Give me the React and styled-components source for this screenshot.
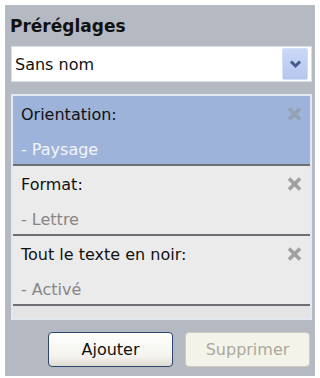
import React from "react";
import styled, { createGlobalStyle } from "styled-components";

const GlobalStyle = createGlobalStyle`
  body {
    margin: 0;
    background: #ffffff;
    font-family: "DejaVu Sans", "Liberation Sans", sans-serif;
  }
`;

const presets = [
  { label: "Orientation:", value: "- Paysage", selected: true },
  { label: "Format:", value: "- Lettre" },
  { label: "Tout le texte en noir:", value: "- Activé" },
];

const CloseIcon = ({ color }) => (
  <IconBox width="15" height="14" viewBox="0 0 15 14">
    <path
      d="M2 1.5 L13 12.5 M13 1.5 L2 12.5"
      stroke={color}
      strokeWidth="3.6"
    />
  </IconBox>
);

const Chevron = () => (
  <svg width="13" height="10" viewBox="0 0 13 10">
    <path
      d="M2 2.5 L6.5 7 L11 2.5"
      fill="none"
      stroke="#45598a"
      strokeWidth="3"
    />
  </svg>
);

const App = () => {
  return (
    <>
      <GlobalStyle />
      <Panel>
        <Title>Préréglages</Title>
        <Combo>
          <ComboText>Sans nom</ComboText>
          <DropButton>
            <Chevron />
          </DropButton>
        </Combo>
        <List>
          {presets.map((p) => (
            <Item key={p.label} selected={p.selected}>
              <ItemHead>
                <ItemLabel>{p.label}</ItemLabel>
                <CloseIcon color={p.selected ? "#95a1b3" : "#a0a0a0"} />
              </ItemHead>
              <ItemValue selected={p.selected}>{p.value}</ItemValue>
            </Item>
          ))}
        </List>
        <Buttons>
          <Button>Ajouter</Button>
          <Button disabled>Supprimer</Button>
        </Buttons>
      </Panel>
    </>
  );
};

const Panel = styled.div`
  margin: 5px 5px 0 5px;
  width: 310px;
  height: 371px;
  box-sizing: border-box;
  background: #b5b9c1;
  padding: 11px 3px 0 6px;
  display: flex;
  flex-direction: column;
`;

const Title = styled.div`
  font-weight: bold;
  font-size: 17px;
  line-height: 20px;
  color: #111;
  margin-left: -1px;
`;

const Combo = styled.div`
  margin-top: 10px;
  height: 36px;
  box-sizing: border-box;
  border: 1px solid #d6dfec;
  background: #fff;
  display: flex;
  align-items: center;
  justify-content: space-between;
  padding: 0 3px 0 3px;
`;

const ComboText = styled.span`
  font-size: 16px;
  color: #111;
`;

const DropButton = styled.div`
  width: 26px;
  height: 32px;
  box-sizing: border-box;
  border: 1px solid #d4def4;
  border-radius: 2px;
  background: linear-gradient(#cbd8f7, #b5c6ee);
  display: flex;
  align-items: center;
  justify-content: center;
`;

const List = styled.div`
  margin-top: 12px;
  height: 226px;
  box-sizing: border-box;
  border: 2px solid #e3e9f3;
  background: #e4e4e4;
`;

const Item = styled.div`
  height: 70px;
  box-sizing: border-box;
  border-bottom: 2px solid #6c6f74;
  background: ${(p) => (p.selected ? "#9db3d9" : "#ebebeb")};
  padding: 8px 8px 0 8px;
`;

const ItemHead = styled.div`
  display: flex;
  align-items: center;
  justify-content: space-between;
  height: 20px;
`;

const IconBox = styled.svg`
  flex-shrink: 0;
  display: block;
`;

const ItemLabel = styled.span`
  font-size: 16px;
  color: #111;
`;

const ItemValue = styled.div`
  margin-top: 16px;
  font-size: 16px;
  line-height: 20px;
  color: ${(p) => (p.selected ? "#f2f5fb" : "#868686")};
`;

const Buttons = styled.div`
  margin-top: 12px;
  display: flex;
  justify-content: flex-end;
  gap: 12px;
  padding-right: 2px;
`;

const Button = styled.button`
  width: 125px;
  height: 35px;
  box-sizing: border-box;
  border-radius: 4px;
  font-family: inherit;
  font-size: 16px;
  border: 1px solid #2c4670;
  background: linear-gradient(#ffffff, #f4f3ee 70%, #dedbd2);
  color: #111;

  &:disabled {
    border-color: #cdcbbd;
    background: #f4f3ea;
    color: #aca899;
  }
`;

export default App;
